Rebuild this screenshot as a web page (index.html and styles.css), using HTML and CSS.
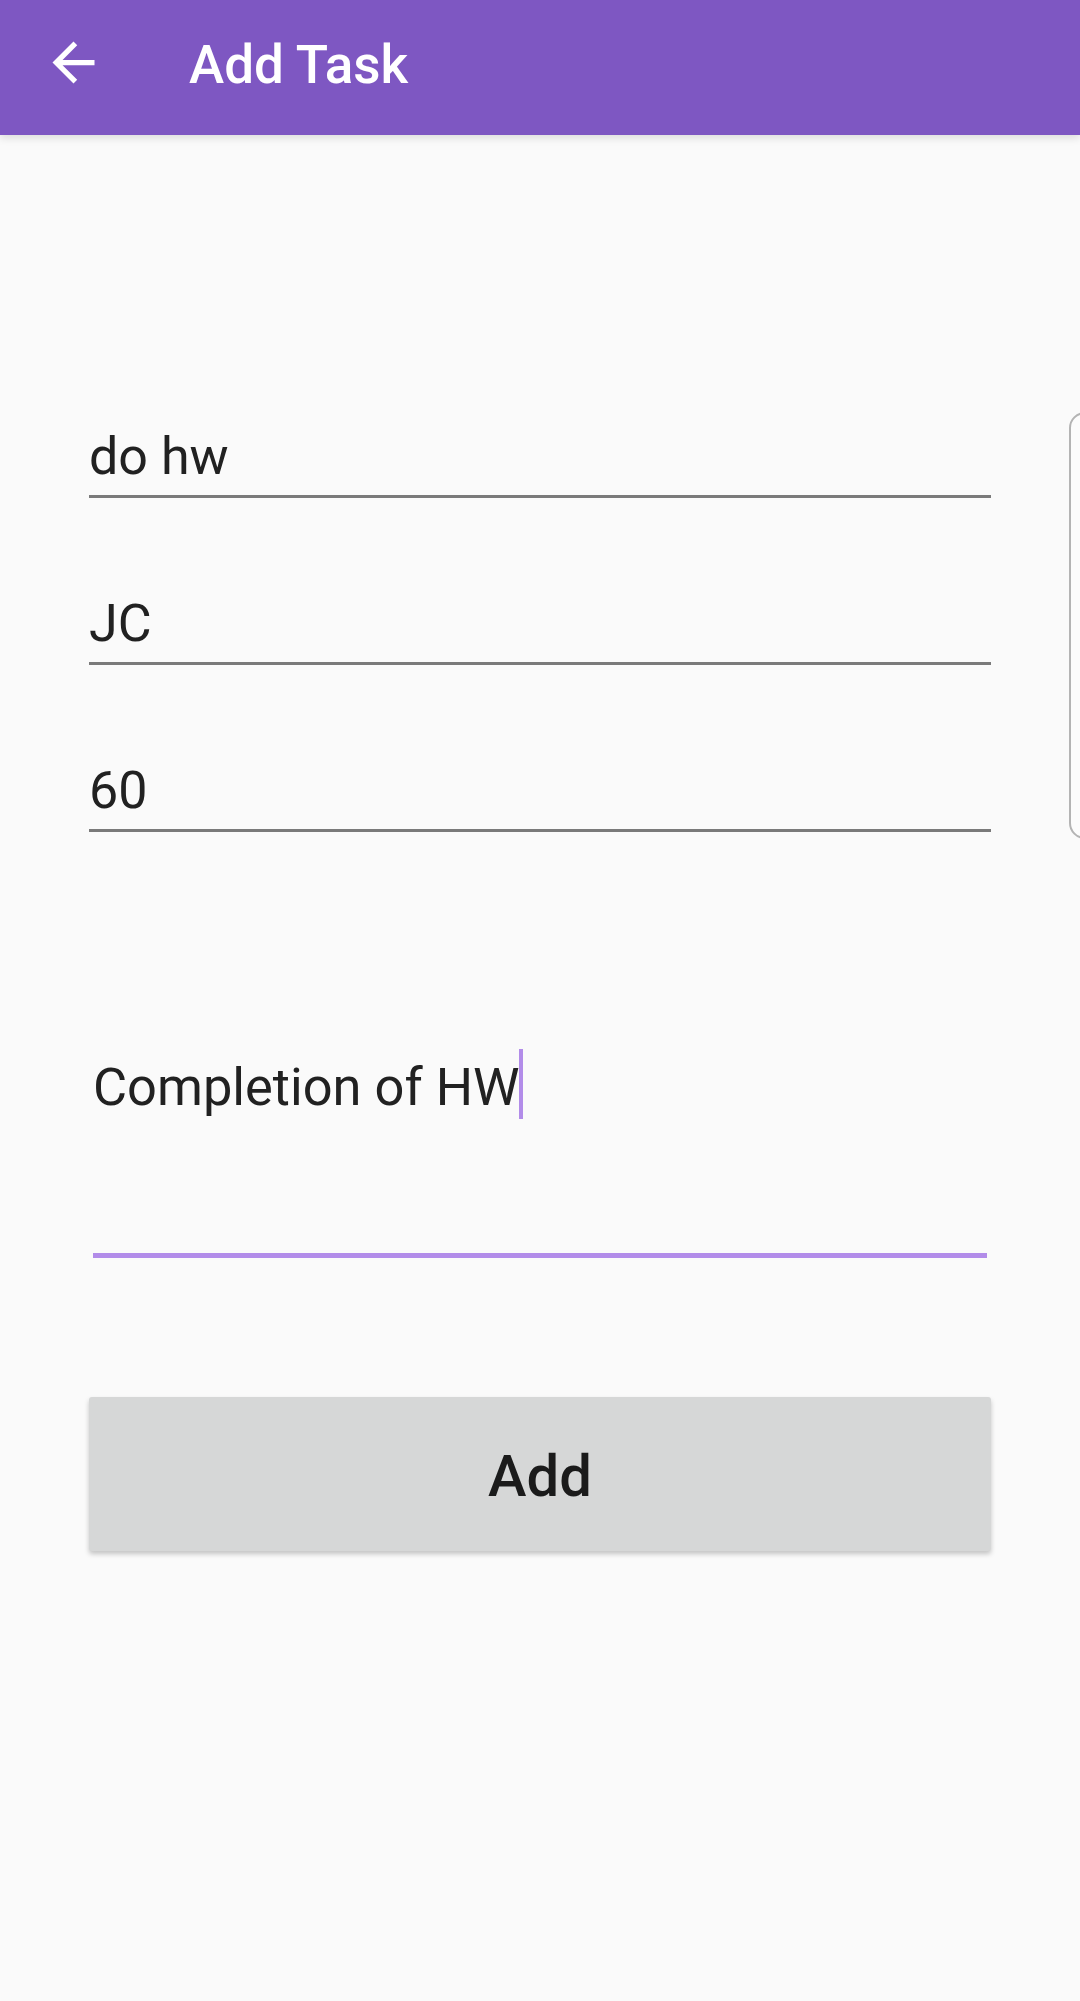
FILE: index.html
```html
<!DOCTYPE html>
<html lang="en">
<head>
<meta charset="utf-8">
<title>Add Task</title>
<link rel="stylesheet" href="styles.css">
</head>
<body>
<header class="appbar">
  <svg class="back" viewBox="0 0 24 24" width="63" height="63" aria-hidden="true">
    <path d="M20 11H7.83l5.59-5.59L12 4l-8 8 8 8 1.41-1.41L7.83 13H20v-2z" fill="#ffffff"/>
  </svg>
  <h1 class="title">Add Task</h1>
</header>
<main class="form">
  <div class="fields">
    <div class="field">do hw</div>
    <div class="field">JC</div>
    <div class="field">60</div>
  </div>
  <div class="field field-active">Completion of HW<span class="cursor"></span></div>
  <button class="add-btn" type="button">Add</button>
</main>
<div class="edge-handle"></div>
</body>
</html>
```

FILE: styles.css
```css
html, body {
  margin: 0;
  padding: 0;
}
body {
  width: 1080px;
  height: 2001px;
  background: #fafafa;
  font-family: Roboto, "Noto Sans", "Liberation Sans", sans-serif;
  overflow: hidden;
  position: relative;
}
.appbar {
  height: 135px;
  box-sizing: border-box;
  background: #7e57c2;
  display: flex;
  align-items: center;
  padding: 0 0 10px 42px;
  box-shadow: 0 3px 8px rgba(0, 0, 0, 0.12);
  position: relative;
  z-index: 1;
}
.back {
  display: block;
  flex: none;
}
.title {
  margin: 0 0 0 84px;
  padding-top: 5px;
  color: #ffffff;
  font-size: 53px;
  line-height: 60px;
  font-weight: 500;
}
.form {
  width: 902px;
  margin-left: 89px;
  padding-top: 292px;
  display: flex;
  flex-direction: column;
}
.fields {
  display: flex;
  flex-direction: column;
  gap: 96px;
}
.field {
  font-size: 52px;
  line-height: 60px;
  color: #212121;
  padding-bottom: 8px;
  border-bottom: 3px solid #7a7a7a;
}
.field-active {
  margin: 225px 4px 0 4px;
  padding-bottom: 136px;
  border-bottom: 5px solid #b28ce9;
  font-size: 52.4px;
}
.cursor {
  display: inline-block;
  width: 4px;
  height: 70px;
  margin: -20px 0 -4px -1px;
  vertical-align: -10px;
  background: #b28ce9;
}
.add-btn {
  margin-top: 139px;
  height: 154px;
  width: 100%;
  border: none;
  border-radius: 3px;
  background: #d6d7d7;
  color: #1b1b1b;
  font-family: Roboto, "Noto Sans", "Liberation Sans", sans-serif;
  font-size: 58px;
  font-weight: 500;
  display: flex;
  align-items: center;
  justify-content: center;
  padding: 4px 0 0 0;
  box-shadow: 0 3px 5px rgba(0, 0, 0, 0.22);
}
.edge-handle {
  position: absolute;
  left: 1069px;
  top: 412px;
  width: 40px;
  height: 427px;
  box-sizing: border-box;
  border: 2px solid #b4b4b4;
  border-radius: 16px;
  background: #fcfcfc;
}
```
